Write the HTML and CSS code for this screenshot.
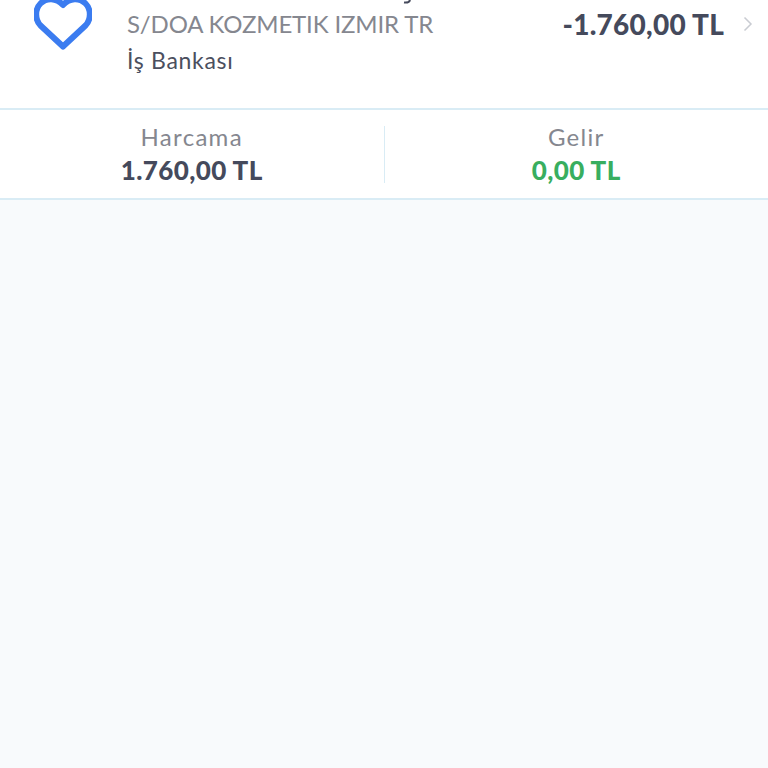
FILE: index.html
```html
<!DOCTYPE html>
<html lang="tr">
<head>
<meta charset="utf-8">
<title>Hareket</title>
<link rel="stylesheet" href="styles.css">
</head>
<body>
<section class="row">
  <svg class="tail" viewBox="0 0 10 4" width="10" height="4" aria-hidden="true">
    <path d="M8 0 C7.500 2 6 3 2 2.500" fill="none" stroke="#454a5c" stroke-width="2"/>
  </svg>
  <svg class="heart" viewBox="0 0 58 56" width="58" height="56" aria-hidden="true">
    <path d="M29 49.500 L6.500 28.500 C0.500 22 1 12 6.500 6.500 C12.500 0.500 22 0.500 29 8 C36 0.500 45.500 0.500 51.500 6.500 C57 12 57.500 22 51.500 28.500 Z" fill="none" stroke="#3b7cf0" stroke-width="6" stroke-linejoin="round"/>
  </svg>
  <div class="info">
    <div class="desc">S/DOA KOZMETIK IZMIR TR</div>
    <div class="bank">İş Bankası</div>
  </div>
  <div class="amount">-1.760,00 TL</div>
  <svg class="chev" viewBox="0 0 10 16" width="10" height="16" aria-hidden="true">
    <path d="M1.500 1.500 L8 8 L1.500 14.500" fill="none" stroke="#c9ccd2" stroke-width="1.500"/>
  </svg>
</section>
<section class="summary">
  <div class="cell">
    <div class="label">Harcama</div>
    <div class="value">1.760,00 TL</div>
  </div>
  <div class="sep"></div>
  <div class="cell">
    <div class="label">Gelir</div>
    <div class="value green">0,00 TL</div>
  </div>
</section>
</body>
</html>
```
FILE: styles.css
```css
* { box-sizing: border-box; }
html, body { margin: 0; height: 100%; }
body {
  background: #f8fafc;
  font-family: "Lato", "Noto Sans", sans-serif;
  overflow: hidden;
}
.row {
  position: relative;
  height: 110px;
  background: #fff;
  border-bottom: 2px solid #d9ecf5;
  display: flex;
  align-items: flex-start;
  padding-left: 34px;
}
.tail { position: absolute; left: 402px; top: 0; }
.heart { margin-top: -3px; flex: none; }
.info { margin-left: 35px; padding-top: 8px; flex: 1; }
.desc { font-size: 24px; line-height: 32px; color: #85878f; letter-spacing: -0.15px; }
.bank { font-size: 23px; line-height: 30px; margin-top: 5px; color: #4b4f5e; letter-spacing: 0.7px; }
.amount { font-size: 28px; line-height: 32px; margin-top: 8px; font-weight: 900; color: #454a5c; letter-spacing: 0.25px; }
.chev { margin: 16px 15px 0 19px; flex: none; }
.summary {
  height: 90px;
  background: #fff;
  border-bottom: 2px solid #d9ecf5;
  display: flex;
  align-items: center;
}
.cell { flex: 1; text-align: center; }
.sep { width: 1px; height: 57px; background: #d9ecf5; }
.label { font-size: 24px; line-height: 29px; color: #85878f; letter-spacing: 1.3px; }
.value { font-size: 26px; line-height: 32px; margin-top: 3px; font-weight: 900; color: #454a5c; letter-spacing: 0.4px; }
.green { color: #38ae5f; }
```
